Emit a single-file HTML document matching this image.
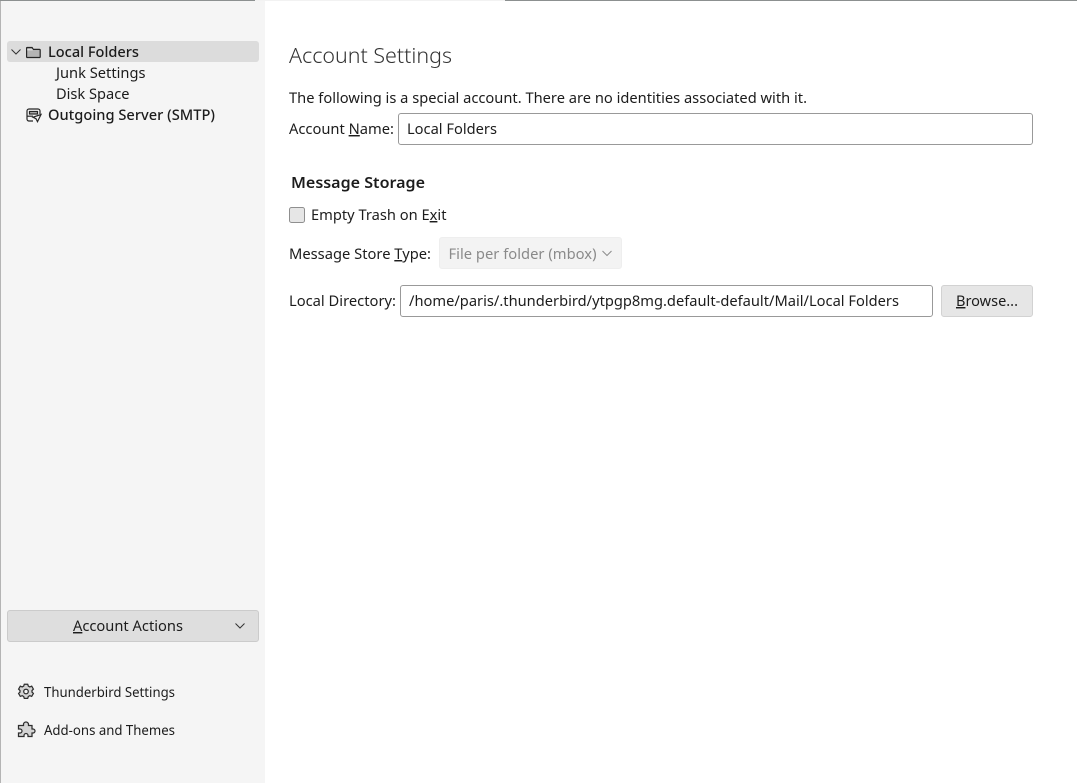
<!DOCTYPE html>
<html><head><meta charset="utf-8"><style>
html,body{margin:0;padding:0;width:1077px;height:783px;overflow:hidden;background:#fff}
svg{display:block}
text{font-family:"Noto Sans","DejaVu Sans","Liberation Sans",sans-serif;font-size:14.5px;fill:#1c1c1c}
</style></head><body>
<svg width="1077" height="783" viewBox="0 0 1077 783" xmlns="http://www.w3.org/2000/svg">
<rect width="1077" height="783" fill="#fff"/>
<rect x="0" y="0" width="265" height="783" fill="#f5f5f5"/>
<rect x="0" y="0" width="1" height="783" fill="#b4b4b4"/>
<rect x="0" y="0" width="255" height="1" fill="#8c9090"/>
<rect x="255" y="0" width="250" height="1" fill="#f2f2f2"/>
<rect x="505" y="0" width="572" height="1" fill="#8c9090"/>

<rect x="7" y="41" width="252" height="21" rx="3" fill="#dcdcdc"/>
<path d="M11.500 49.500L16 54l4.500-4.500" fill="none" stroke="#333" stroke-width="1"/>
<path d="M26.600 48v8.700a.8.800 0 0 0 .8.800h12a.8.800 0 0 0 .8-.8V50.200a.8.800 0 0 0-.8-.8H33.300l-1.200-1.900h-5a.5.500 0 0 0-.5.500z" fill="#b4b4b4" stroke="#262626" stroke-width="1.200"/>
<path d="M27.200 49.800h5.600" fill="none" stroke="#f0f0f0" stroke-width="1"/>
<text x="48" y="57" style="font-weight:500" textLength="91" lengthAdjust="spacingAndGlyphs">Local Folders</text>
<text x="56" y="78" textLength="89.500" lengthAdjust="spacingAndGlyphs">Junk Settings</text>
<text x="56" y="99" textLength="73.500" lengthAdjust="spacingAndGlyphs">Disk Space</text>
<g fill="none" stroke="#262626" stroke-width="1.200">
<path d="M33 121h-4a2 2 0 0 1-2-2v-8a2 2 0 0 1 2-2h9a2 2 0 0 1 2 2v3"/>
<rect x="29.500" y="111.500" width="8" height="2.500" fill="#b4b4b4"/>
<path d="M27 116.200h6"/>
<path d="M41 114.500l-8 2.700 3 1.500 1.500 3z" fill="#f5f5f5"/>
</g>
<text x="48" y="120" style="font-weight:500" textLength="167" lengthAdjust="spacingAndGlyphs">Outgoing Server (SMTP)</text>

<rect x="7.500" y="610.500" width="251" height="31" rx="2.500" fill="#dedede" stroke="#cbcbcb"/>
<text x="73" y="631" textLength="110" lengthAdjust="spacingAndGlyphs"><tspan text-decoration="underline">A</tspan>ccount Actions</text>
<path d="M235.500 623.500L240 628l4.500-4.500" fill="none" stroke="#333" stroke-width="1"/>

<g fill="none" stroke="#2e2e2e" stroke-width="1.250">
<path d="M24.300 684.200h3.400l.6 1.900 1.500.8 1.900-.7 1.700 2.900-1.400 1.400v1.600l1.400 1.400-1.700 2.900-1.900-.7-1.500.8-.6 1.900h-3.400l-.6-1.900-1.500-.8-1.900.7-1.700-2.900 1.400-1.400v-1.600l-1.400-1.400 1.700-2.900 1.900.7 1.500-.8z" fill="#d4d4d4"/>
<circle cx="26" cy="691.500" r="2.300" fill="#f5f5f5"/>
<path d="M18.500 725.500h5v-1a2.500 2.500 0 0 1 5 0v1h3.500v3.500h1a2 2 0 0 1 0 4h-1v3.500h-4v-1a2 2 0 0 0-4 0v1h-5.500v-3.500h1.500a2 2 0 0 0 0-4h-1.500z" fill="#d4d4d4"/>
</g>
<text x="44" y="697" style="font-size:13.500px" textLength="131" lengthAdjust="spacingAndGlyphs">Thunderbird Settings</text>
<text x="44" y="735" style="font-size:13.500px" textLength="131" lengthAdjust="spacingAndGlyphs">Add-ons and Themes</text>

<text x="289" y="63" style="font-size:21px;font-weight:300;fill:#333" textLength="163" lengthAdjust="spacingAndGlyphs">Account Settings</text>
<text x="289" y="103" textLength="518" lengthAdjust="spacingAndGlyphs">The following is a special account. There are no identities associated with it.</text>
<text x="289" y="134" textLength="105" lengthAdjust="spacingAndGlyphs">Account <tspan text-decoration="underline">N</tspan>ame:</text>
<rect x="398.500" y="113.500" width="634" height="31" rx="2.500" fill="#fff" stroke="#999"/>
<text x="407" y="134" textLength="90" lengthAdjust="spacingAndGlyphs">Local Folders</text>
<text x="291" y="188" style="font-size:15.500px;font-weight:600" textLength="134" lengthAdjust="spacingAndGlyphs">Message Storage</text>
<rect x="289.500" y="207.500" width="15" height="15" rx="2" fill="#e6e6e6" stroke="#8f8f8f"/>
<text x="311" y="220" textLength="135.500" lengthAdjust="spacingAndGlyphs">Empty Trash on E<tspan text-decoration="underline">x</tspan>it</text>
<text x="289" y="259" textLength="142" lengthAdjust="spacingAndGlyphs">Message Store <tspan text-decoration="underline">T</tspan>ype:</text>
<rect x="439.500" y="237.500" width="182" height="31" rx="2.500" fill="#f3f3f3" stroke="#eee"/>
<text x="448.500" y="259" style="fill:#8a8a8a" textLength="148" lengthAdjust="spacingAndGlyphs">File per folder (mbox)</text>
<path d="M602.500 251L607 255.500l4.500-4.500" fill="none" stroke="#8a8a8a" stroke-width="1"/>
<text x="289" y="306" textLength="107" lengthAdjust="spacingAndGlyphs">Local Directory:</text>
<rect x="400.500" y="285.500" width="532" height="31" rx="2.500" fill="#fff" stroke="#999"/>
<text x="409" y="306" textLength="490" lengthAdjust="spacingAndGlyphs">/home/paris/.thunderbird/ytpgp8mg.default-default/Mail/Local Folders</text>
<rect x="941.500" y="285.500" width="91" height="31" rx="2.500" fill="#e6e6e6" stroke="#d2d2d2"/>
<text x="956" y="306" textLength="62" lengthAdjust="spacingAndGlyphs"><tspan text-decoration="underline">B</tspan>rowse...</text>
</svg>
</body></html>
